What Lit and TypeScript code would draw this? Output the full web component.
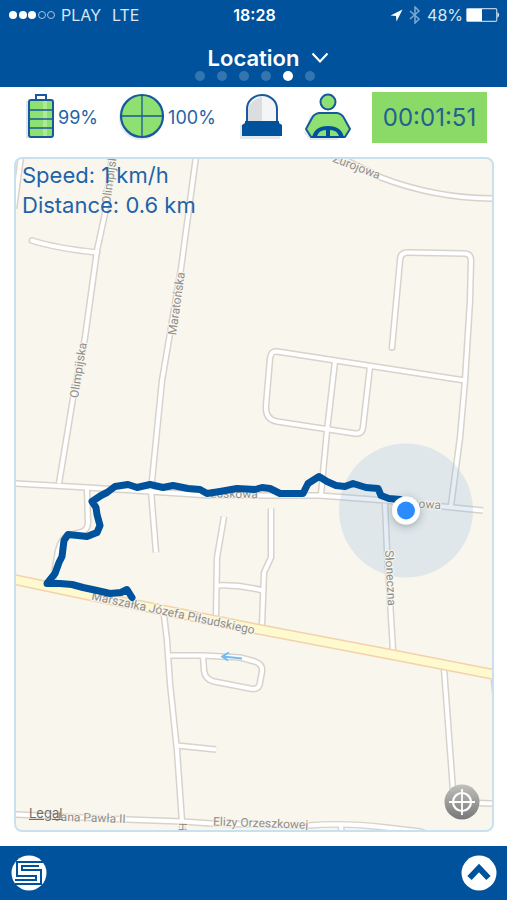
import { LitElement, html, css, svg } from "lit";
import { customElement } from "lit/decorators.js";
import { classMap } from "lit/directives/class-map.js";

/* Street centre lines, in map units. */
const ROADS = [
  "M21 156 L14 208",
  "M112 156 L105 213 L97 250 L85 337 L73 398 L59 483",
  "M32 240 Q57 248 97 252",
  "M196 156 L181 268 L162 380 L151 490",
  "M151 490 L156 552",
  "M330 152 L381 177 Q436 198 494 198",
  "M392 347 L400 260 Q400 252 408 252 L464 253 Q471 253 471 260 L470 300 L465 380 L460 437 L451 505",
  "M465 380 L277 351 Q271 350 270 358 L266 405 Q265 419 277 421 L355 433 Q362 434 363 427 L370 366",
  "M335 361 L327 430 L321 494",
  "M14 483 L87 487 L150 491 L210 495 L320 495 L386 500 L453 507 L483 510",
  "M87 488 L88 522 Q88 530 80 532 L68 535 Q61 538 58 550 L53 580",
  "M224 516 L217 557 L216 616",
  "M217 585 Q240 584 263 590",
  "M271 508 L271 557 L264 572 L262 625",
  "M385 503 L387 550 L393 650",
  "M164 615 L167 640 L170 683 L177 750 L182 821 L183 840",
  "M168 655 L203 655 L240 657 L255 661 Q263 664 262 671 L260 682 Q259 690 250 688 L214 681 Q205 679 204 670 L203 655",
  "M177 745 L216 749",
  "M14 814 L127 819 L182 821 L212 823 L308 825 Q345 822 386 827 L420 831 L440 838",
  "M341 825 L342 840",
  "M444 668 L453 790 L462 802 L494 803",
];

const AVENUE = "M14 579 L100 597 L254 628 L386 653 L494 674";

const TRACK =
  "M132 597 L127 589 L121 592 L110 593 L97 590 L83 587 L72 584 L60 583 L47 583 L55 573 L59 562 L62 556 L64 540 L68 534 L78 535 L87 536 L97 532 L100 525 L97 514 L96 507 L92 501 L101 495 L107 492 L115 486 L128 484 L137 487 L150 484 L163 487 L173 485 L188 488 L200 489 L207 493 L220 491 L237 488 L255 489 L262 487 L270 488 L280 493 L303 493 L308 483 L319 476 L327 481 L336 485 L345 486 L353 483 L366 487 L378 488 L381 495 L389 498 L400 499";

/* Street names: text, anchor point and heading. */
const LABELS: [string, number, number, number][] = [
  ["Olimpijska", 78, 398, -81],
  ["Olimpijska", 110, 204, -82],
  ["Maratońska", 176, 335, -82],
  ["Żurojowa", 332, 161, 21],
  ["Łuskowa", 210, 497, 1],
  ["Łuskowa", 393, 506, 3],
  ["Słoneczna", 385, 550, 87],
  ["Marszałka Józefa Piłsudskiego", 91, 599, 12],
  ["Jana Pawła II", 54, 820, 2],
  ["Elizy Orzeszkowej", 213, 825, 2],
  ["H", 187, 831, -88],
];

@customElement("street-map")
class StreetMap extends LitElement {
  static styles = css`
    :host { display: block; }
    svg { display: block; width: 100%; height: 100%; }
    .line { fill: none; stroke-linejoin: round; stroke-linecap: butt; }
    .casing { stroke: #d8d3ca; stroke-width: 7; }
    .surface { stroke: #fff; stroke-width: 4; }
    .round { stroke-linecap: round; }
    .avenue-casing { stroke: #f2d3a9; stroke-width: 11; }
    .avenue { stroke: #fff9cf; stroke-width: 8; }
    .name {
      font: 12px Roboto, "Noto Sans", sans-serif;
      fill: #8f8d89;
      stroke: #f9f6ee;
      stroke-width: 2;
      paint-order: stroke;
    }
    .track { stroke: #00529c; stroke-width: 7; stroke-linecap: round; }
    .arrow { stroke: #70bdf2; stroke-width: 2; }
    .range { fill: #8db4de; fill-opacity: 0.23; }
    .halo { fill: #fff; }
    .dot { fill: #2b8cff; }
  `;

  render() {
    return html`
      <svg viewBox="16 158 476 672" preserveAspectRatio="xMidYMid slice" role="img" aria-label="Street map with the route travelled">
        <defs>
          <filter id="soft" x="-50%" y="-50%" width="200%" height="200%">
            <feDropShadow dx="0" dy="2" stdDeviation="4" flood-color="#345" flood-opacity="0.4"></feDropShadow>
          </filter>
        </defs>
        ${ROADS.map((d, i) => svg`<path class=${classMap({ line: true, casing: true, round: i === 2 || i === 6 })} d=${d}></path>`)}
        ${ROADS.map((d, i) => svg`<path class=${classMap({ line: true, surface: true, round: i === 2 || i === 6 })} d=${d}></path>`)}
        <path class="line avenue-casing" d=${AVENUE}></path>
        <path class="line avenue" d=${AVENUE}></path>
        <path class="line casing" d="M494 679 L496 700"></path>
        <path class="line arrow" d="M242 658 L223 656 M229 652 L222 656 L228 660"></path>
        <circle class="range" cx="406" cy="510" r="67"></circle>
        ${LABELS.map(([t, x, y, a]) => svg`<text class="name" transform="translate(${x} ${y}) rotate(${a})">${t}</text>`)}
        <path class="line track" d=${TRACK}></path>
        <circle class="halo" cx="406" cy="510" r="14" filter="url(#soft)"></circle>
        <circle class="dot" cx="406" cy="510" r="9"></circle>
      </svg>
    `;
  }
}

@customElement("app-root")
class AppRoot extends LitElement {
  static styles = css`
    :host {
      display: flex;
      flex-direction: column;
      min-height: 100vh;
      background: #fff;
      color: #1f63a8;
      font-family: Inter, "Liberation Sans", sans-serif;
    }
    * { box-sizing: border-box; }
    svg { display: block; flex: none; }
    button {
      border: 0; padding: 0; margin: 0; background: none;
      color: inherit; font: inherit; cursor: pointer;
    }
    header { background: #00529c; color: #fff; height: 87px; }
    .status {
      display: grid;
      grid-template-columns: 1fr auto 1fr;
      align-items: center;
      height: 30px;
      padding: 0 7px 0 9px;
      font-size: 16px;
    }
    .carrier, .power { display: flex; align-items: center; }
    .carrier { gap: 5px; color: #d9e6f3; }
    .network { margin-left: 6px; }
    .power { justify-content: flex-end; gap: 3px; color: #d9e6f3; }
    .clock { font-weight: 600; }
    .title {
      display: flex;
      align-items: center;
      justify-content: center;
      gap: 12px;
      width: 100%;
      height: 40px;
      padding: 16px 0 0 30px;
      font-size: 22px;
      line-height: 24px;
      font-weight: 600;
    }
    .pages { display: flex; justify-content: center; gap: 12px; padding: 1px 0 0 2px; }
    .page { width: 10px; height: 10px; border-radius: 50%; background: #3375b0; }
    .current { background: #fff; }
    .stats {
      display: flex;
      align-items: center;
      justify-content: space-between;
      height: 60px;
      padding: 0 20px 0 24px;
      font-size: 18px;
    }
    .stat { display: flex; align-items: center; gap: 2px; }
    .alerts { display: flex; gap: 20px; padding-left: 4px; }
    .timer {
      display: flex;
      align-items: center;
      justify-content: center;
      width: 115px;
      height: 51px;
      background: #8bd966;
      font-size: 24px;
      color: #235f93;
    }
    main {
      position: relative;
      flex: 1;
      display: flex;
      flex-direction: column;
      justify-content: space-between;
      margin: 10px 13px 14px 14px;
      min-height: 400px;
      border: 2px solid #c9e0f1;
      border-radius: 8px;
      background: #f9f6ee;
      overflow: hidden;
    }
    street-map { position: absolute; inset: 0; }
    .readout { position: relative; padding: 1px 6px; font-size: 22px; line-height: 30px; }
    .readout p { margin: 0; }
    .tools {
      position: relative;
      display: flex;
      align-items: flex-end;
      justify-content: space-between;
      padding: 0 12px 10px 13px;
    }
    .legal { font-size: 13px; line-height: 14px; color: #6f6d69; }
    footer {
      display: flex;
      align-items: center;
      justify-content: space-between;
      height: 54px;
      padding: 0 10px 0 11px;
      background: #00529c;
    }
  `;

  private get statusBar() {
    return html`
      <div class="status">
        <div class="carrier">
          <svg width="47" height="10" viewBox="0 0 47 10">
            <g fill="#fff"><circle cx="4" cy="5" r="4"></circle><circle cx="14" cy="5" r="4"></circle><circle cx="23" cy="5" r="4"></circle></g>
            <g fill="none" stroke="#a9c6e2"><circle cx="33" cy="5" r="3.5"></circle><circle cx="42" cy="5" r="3.5"></circle></g>
          </svg>
          <span>PLAY</span><span class="network">LTE</span>
        </div>
        <time class="clock">18:28</time>
        <div class="power">
          <svg width="13" height="13" viewBox="0 0 13 13"><path fill="#fff" d="M12.5 .5 L6.5 12.5 L6 7 L.5 6.5z"></path></svg>
          <svg width="18" height="18" viewBox="0 0 18 18"><path fill="none" stroke="#7fa9d1" stroke-width="1.5" d="M4 5 L13 13 L9 17 L9 1 L13 5 L4 13"></path></svg>
          <span>48%</span>
          <svg width="34" height="14" viewBox="0 0 34 14">
            <rect x=".7" y=".7" width="30" height="12.6" rx="1" fill="none" stroke="#b5cde5" stroke-width="1.2"></rect>
            <rect x="1" y="1" width="15" height="12" fill="#fff"></rect>
            <path d="M31.5 4 q3 3 0 6z" fill="#fff"></path>
          </svg>
        </div>
      </div>
    `;
  }

  private get stats() {
    return html`
      <section class="stats" aria-label="Trip state">
        <div class="stat">
          <svg width="32" height="48" viewBox="0 0 32 48">
            <path fill="#c9d3de" d="M2 8h4v34h20v3H2z" opacity=".6"></path>
            <path fill="#fff" stroke="#17599c" stroke-width="2" d="M12 7V2h10v5"></path>
            <rect x="5" y="7" width="24" height="37" rx="2" fill="#8ee070" stroke="#17599c" stroke-width="2"></rect>
            <path fill="#aeea93" d="M19 8h4v35h-4z"></path>
            <path stroke="#17599c" stroke-width="1.3" d="M5 17h24M5 26h24M5 35h24"></path>
          </svg>
          <span>99%</span>
        </div>
        <div class="stat">
          <svg width="48" height="48" viewBox="0 0 48 48">
            <circle cx="23" cy="25" r="22" fill="#c9d3de" opacity=".5"></circle>
            <circle cx="24" cy="23" r="21" fill="#8ee070" stroke="#17599c" stroke-width="2.2"></circle>
            <path stroke="#17599c" stroke-width="1.3" d="M24 2v42M3 23h42"></path>
          </svg>
          <span>100%</span>
        </div>
        <div class="alerts">
          <svg width="44" height="48" viewBox="0 0 44 48">
            <path fill="#c9d3de" opacity=".5" d="M0 32h40v14H0z"></path>
            <path fill="#f4f5f7" stroke="#17599c" stroke-width="2" d="M7 31V16a15 14 0 0 1 30 0v15z"></path>
            <path fill="#dcdde1" d="M8 29V16q2-9 14-12v25z"></path>
            <path fill="#00529c" d="M5 28h34v2l3 2v11H2V32l3-2z"></path>
          </svg>
          <svg width="48" height="48" viewBox="0 0 48 48">
            <path fill="#c9d3de" opacity=".5" d="M0 40l6-17 8-3 24 2-4 25H6z"></path>
            <circle cx="24" cy="9" r="7.5" fill="#8ee070" stroke="#17599c" stroke-width="2"></circle>
            <path fill="#8ee070" stroke="#17599c" stroke-width="2" stroke-linejoin="round" d="M15 20h18q5 1 7 5l6 11-5 8H7l-5-8 6-11q2-4 7-5z"></path>
            <path fill="#00529c" d="M8 45Q10 33 24 33t16 12z"></path>
            <path fill="#8ee070" d="M13 43q2-6 9-6v6zM26 37q7 0 9 6h-9z"></path>
          </svg>
        </div>
        <time class="timer">00:01:51</time>
      </section>
    `;
  }

  render() {
    return html`
      <header>
        ${this.statusBar}
        <button class="title">
          Location
          <svg width="18" height="12" viewBox="0 0 18 12"><path fill="none" stroke="#fff" stroke-width="2.2" d="M1.5 1.5 L9 9.5 L16.5 1.5"></path></svg>
        </button>
        <div class="pages">
          ${[0, 1, 2, 3, 4, 5].map((i) => html`<span class=${classMap({ page: true, current: i === 4 })}></span>`)}
        </div>
      </header>
      ${this.stats}
      <main>
        <street-map></street-map>
        <div class="readout">
          <p>Speed: 1 km/h</p>
          <p>Distance: 0.6 km</p>
        </div>
        <div class="tools">
          <a class="legal" href="#legal">Legal</a>
          <button aria-label="Centre on my position">
            <svg width="36" height="36" viewBox="0 0 36 36">
              <defs><linearGradient id="metal" x1="0" y1="0" x2="0" y2="1"><stop offset="0" stop-color="#c0c0bd"></stop><stop offset="1" stop-color="#777"></stop></linearGradient></defs>
              <circle cx="18" cy="18" r="17.5" fill="url(#metal)"></circle>
              <circle cx="18" cy="18" r="9" fill="none" stroke="#fff" stroke-width="2.2"></circle>
              <path stroke="#fff" stroke-width="1.8" d="M18 5v26M5 18h26"></path>
            </svg>
          </button>
        </div>
      </main>
      <footer>
        <button aria-label="Home">
          <svg width="36" height="36" viewBox="0 0 36 36">
            <circle cx="18" cy="18" r="17.5" fill="#fff"></circle>
            <path fill="none" stroke="#00529c" stroke-width="2" d="M32 7H6v14h19v4H4"></path>
            <path fill="none" stroke="#00529c" stroke-width="2" d="M4 29h26V15H11v-4h17"></path>
          </svg>
        </button>
        <button aria-label="Show more">
          <svg width="36" height="36" viewBox="0 0 36 36">
            <circle cx="18" cy="18" r="17.5" fill="#fff"></circle>
            <path fill="none" stroke="#00529c" stroke-width="6" d="M8.5 23 L18 13 L27.5 23"></path>
          </svg>
        </button>
      </footer>
    `;
  }
}
